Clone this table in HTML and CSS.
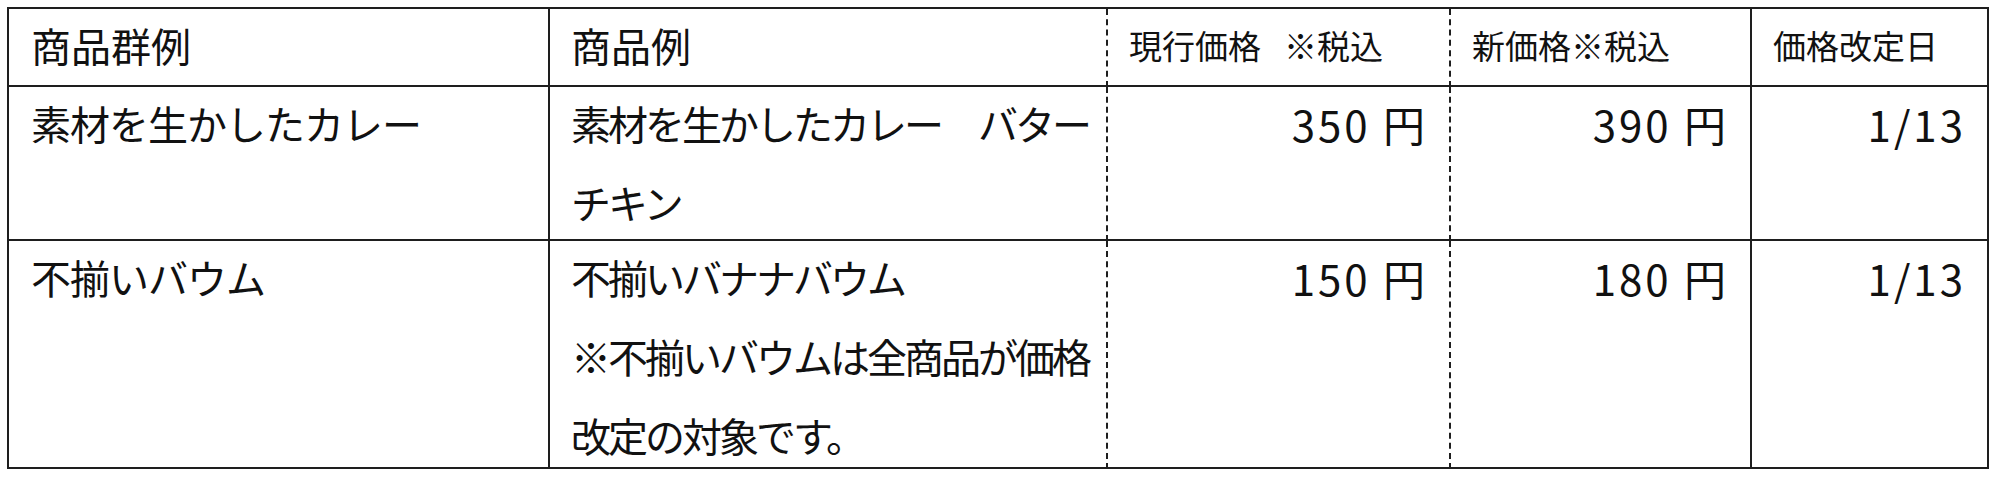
FILE: index.html
```html
<!DOCTYPE html>
<html lang="ja">
<head>
<meta charset="utf-8">
<title>価格改定</title>
<link rel="stylesheet" href="styles.css">
</head>
<body>
<div class="price-table">
  <div class="cell head">商品群例</div>
  <div class="cell head desc dashed">商品例</div>
  <div class="cell head-sm dashed">現行価格&ensp;&thinsp;※税込</div>
  <div class="cell head-sm">新価格※税込</div>
  <div class="cell head-sm">価格改定日</div>

  <div class="cell"><p class="txt group">素材を生かしたカレー</p></div>
  <div class="cell desc dashed"><p class="txt item">素材を生かしたカレー　バター<br>チキン</p></div>
  <div class="cell num dashed"><p class="txt">350 円</p></div>
  <div class="cell num"><p class="txt">390 円</p></div>
  <div class="cell num"><p class="txt">1/13</p></div>

  <div class="cell"><p class="txt group">不揃いバウム</p></div>
  <div class="cell desc dashed"><p class="txt item">不揃いバナナバウム<br>※不揃いバウムは全商品が価格<br>改定の対象です。</p></div>
  <div class="cell num dashed"><p class="txt">150 円</p></div>
  <div class="cell num"><p class="txt">180 円</p></div>
  <div class="cell num"><p class="txt">1/13</p></div>
</div>
</body>
</html>
```
FILE: styles.css
```css
* {
  box-sizing: border-box;
}

html, body {
  margin: 0;
  padding: 0;
  background: #ffffff;
}

body {
  padding: 7px 0 0 7px;
  font-family: "Noto Sans CJK JP", "Noto Sans", sans-serif;
  color: #111111;
}

.price-table {
  display: grid;
  width: 1982px;
  grid-template-columns: 541px 558px 343px 301px 237px;
  grid-template-rows: 78px 154px 228px;
  border-top: 2px solid #1e1e1e;
  border-left: 2px solid #1e1e1e;
}

.cell {
  border-right: 2px solid #1e1e1e;
  border-bottom: 2px solid #1e1e1e;
  padding: 0 24px 0 22px;
  font-size: 40px;
  line-height: 79px;
  white-space: nowrap;
}

.cell.dashed {
  border-right-style: dashed;
}

.cell.desc {
  padding-left: 21px;
}

.head {
  line-height: 72px;
  padding-bottom: 4px;
}

.head-sm {
  font-size: 33px;
  line-height: 72px;
  padding-left: 21px;
  padding-bottom: 4px;
}

.txt {
  margin: -3px 0 0 0;
}

.txt.group {
  letter-spacing: -1px;
}

.txt.item {
  letter-spacing: -3px;
}

.num {
  text-align: right;
  font-size: 42px;
  letter-spacing: 3px;
  padding-right: 21px;
}
```
